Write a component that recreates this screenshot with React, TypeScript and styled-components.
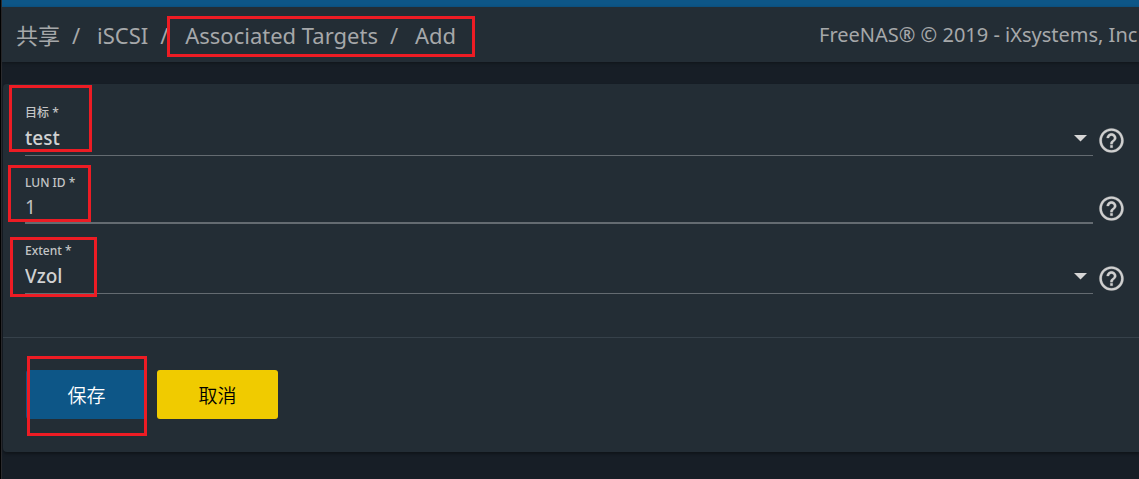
import React from 'react';
import styled, { createGlobalStyle } from 'styled-components';

const GlobalStyle = createGlobalStyle`
  *, *::before, *::after { box-sizing: border-box; }
  body {
    margin: 0;
    background: #171e26;
    color: #cfcfcf;
    font-family: "Noto Sans", "Noto Sans CJK SC", sans-serif;
    overflow: hidden;
  }
`;

const Page = styled.div`
  min-height: 100vh;
  border-left: 1px solid #000;
  background: #171e26;
`;

const Shell = styled.div`
  min-height: 100vh;
  border-left: 1px solid #2b2b2e;
`;

const TopStripe = styled.div`
  height: 7px;
  background: #0d5687;
`;

const Toolbar = styled.header`
  display: flex;
  justify-content: space-between;
  align-items: center;
  height: 55px;
  padding-left: 14px;
  background: #232d35;
  box-shadow: 0 1px 3px rgba(0, 0, 0, 0.35);
  color: #a6a8aa;
  white-space: nowrap;
`;

const Crumbs = styled.nav`
  display: flex;
  align-items: center;
  font-size: 22px;
  line-height: 32px;
`;

const Crumb = styled.a`
  color: inherit;
  text-decoration: none;
`;

const Slash = styled.span`
  width: 37px;
  padding-left: 12px;
`;

const Marked = styled.div`
  position: relative;
  display: flex;
  align-items: center;
`;

const Mark = styled.span<{ $top: number; $left: number; $width: number; $height: number }>`
  position: absolute;
  z-index: 1;
  top: ${(p) => p.$top}px;
  left: ${(p) => p.$left}px;
  width: ${(p) => p.$width}px;
  height: ${(p) => p.$height}px;
  border: 3px solid #ed1c24;
  pointer-events: none;
`;

const Copyright = styled.span`
  flex: 0 0 320px;
  overflow: hidden;
  font-size: 20px;
  line-height: 28px;
`;

const Card = styled.form`
  margin: 22px 0 0 1px;
  border-radius: 4px 0 0 4px;
  background: #232d35;
  box-shadow: 0 2px 3px rgba(0, 0, 0, 0.35);
`;

const Fields = styled.div`
  display: flex;
  flex-direction: column;
  gap: 19px;
  padding: 21px 13px 43px 22px;
  border-bottom: 1px solid #36414a;
`;

const Row = styled.div`
  position: relative;
  display: flex;
  align-items: flex-end;
  gap: 4px;
`;

const Field = styled.div`
  flex: 1;
  display: flex;
  flex-direction: column;
`;

const Label = styled.label`
  height: 16px;
  font-size: 12px;
  line-height: 16px;
  font-weight: 500;
  color: #c4c5c6;
`;

const SelectBox = styled.div`
  position: relative;
  height: 35px;
  border-bottom: 1px solid #646b71;
`;

const Select = styled.select`
  appearance: none;
  display: block;
  width: 100%;
  height: 34px;
  padding: 0;
  border: 0;
  outline: 0;
  background: transparent;
  color: #d0d1d2;
  font: 500 19px/34px "Noto Sans", "Noto Sans CJK SC", sans-serif;
`;

const Caret = styled.svg`
  position: absolute;
  top: 14px;
  right: 6px;
  pointer-events: none;
`;

const Input = styled.input`
  width: 100%;
  height: 33px;
  padding: 0;
  border: 0;
  border-bottom: 2px solid #646b71;
  outline: 0;
  background: transparent;
  color: #c0c1c2;
  font: 400 19px/31px "Noto Sans", "Noto Sans CJK SC", sans-serif;
`;

const HelpButton = styled.button`
  display: flex;
  padding: 0 0 1px;
  border: 0;
  background: transparent;
  color: #cfcfcf;
`;

const Actions = styled.div`
  display: flex;
  gap: 10px;
  padding: 32px 23px 33px;
`;

const Button = styled.button<{ $primary?: boolean }>`
  width: 121px;
  height: 49px;
  padding: 0;
  border: 0;
  border-radius: 3px;
  background: ${(p) => (p.$primary ? '#0d5687' : '#f0cb00')};
  color: ${(p) => (p.$primary ? '#fff' : '#000')};
  font: 350 19px/24px "Noto Sans CJK SC", sans-serif;
`;

function Help({ topic }: { topic: string }) {
  return (
    <HelpButton type="button" aria-label={topic}>
      <svg width="29" height="29" viewBox="0 0 24 24" fill="currentColor" stroke="currentColor" strokeWidth="0.2" aria-hidden="true">
        <path d="M11 18h2v-2h-2v2zm1-16C6.48 2 2 6.48 2 12s4.480 10 10 10 10-4.480 10-10S17.520 2 12 2zm0 18c-4.410 0-8-3.590-8-8s3.590-8 8-8 8 3.590 8 8-3.590 8-8 8zm0-14c-2.210 0-4 1.790-4 4h2c0-1.100.9-2 2-2s2 .9 2 2c0 2-3 1.750-3 5h2c0-2.250 3-2.500 3-5 0-2.210-1.790-4-4-4z" />
      </svg>
    </HelpButton>
  );
}

function SelectField({ id, label, value }: { id: string; label: string; value: string }) {
  return (
    <Field>
      <Label htmlFor={id}>{label} *</Label>
      <SelectBox>
        <Select id={id} defaultValue={value}>
          <option value={value}>{value}</option>
        </Select>
        <Caret width="13" height="7" viewBox="0 0 13 7" aria-hidden="true">
          <path d="M0 0h13L6.500 6.500z" fill="#d6d6d6" />
        </Caret>
      </SelectBox>
    </Field>
  );
}

export default function App() {
  return (
    <>
      <GlobalStyle />
      <Page>
        <Shell>
          <TopStripe />
          <Toolbar>
            <Crumbs>
              <Crumb href="#sharing">共享</Crumb>
              <Slash>/</Slash>
              <Crumb href="#iscsi">iSCSI</Crumb>
              <Slash>/</Slash>
              <Marked>
                <Crumb href="#targets">Associated Targets</Crumb>
                <Slash>/</Slash>
                <Crumb href="#add">Add</Crumb>
                <Mark $top={-3} $left={-18} $width={308} $height={41} />
              </Marked>
            </Crumbs>
            <Copyright>FreeNAS® © 2019 - iXsystems, Inc</Copyright>
          </Toolbar>
          <Card onSubmit={(e) => e.preventDefault()}>
            <Fields>
              <Row>
                <SelectField id="target" label="目标" value="test" />
                <Help topic="目标" />
                <Mark $top={-20} $left={-16} $width={83} $height={67} />
              </Row>
              <Row>
                <Field>
                  <Label htmlFor="lun">LUN ID *</Label>
                  <Input id="lun" type="text" defaultValue="1" />
                </Field>
                <Help topic="LUN ID" />
                <Mark $top={-10} $left={-17} $width={83} $height={57} />
              </Row>
              <Row>
                <SelectField id="extent" label="Extent" value="Vzol" />
                <Help topic="Extent" />
                <Mark $top={-6} $left={-15} $width={87} $height={60} />
              </Row>
            </Fields>
            <Actions>
              <Marked>
                <Button type="submit" $primary>保存</Button>
                <Mark $top={-14} $left={1} $width={120} $height={80} />
              </Marked>
              <Button type="button">取消</Button>
            </Actions>
          </Card>
        </Shell>
      </Page>
    </>
  );
}
